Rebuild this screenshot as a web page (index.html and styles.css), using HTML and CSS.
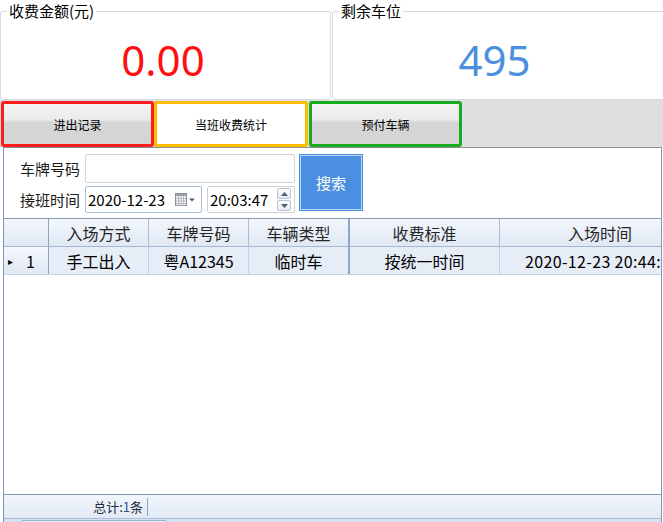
FILE: index.html
```html
<!DOCTYPE html>
<html lang="zh-CN">
<head>
<meta charset="utf-8">
<title>当班收费统计</title>
<link rel="stylesheet" href="styles.css">
</head>
<body>
<div class="page">
  <div class="top">
    <fieldset class="group group-left">
      <legend class="group-title">收费金额(元)</legend>
      <div class="value value-red">0.00</div>
    </fieldset>
    <fieldset class="group group-right">
      <legend class="group-title">剩余车位</legend>
      <div class="value value-blue">495</div>
    </fieldset>
  </div>

  <div class="tabs">
    <div class="tab tab-red">进出记录</div>
    <div class="tab tab-yellow tab-active">当班收费统计</div>
    <div class="tab tab-green">预付车辆</div>
  </div>

  <div class="panel">
    <div class="form">
      <div class="fields">
        <div class="frow frow-1">
          <label class="flabel">车牌号码</label>
          <div class="textbox"></div>
        </div>
        <div class="frow frow-2">
          <label class="flabel">接班时间</label>
          <div class="datebox">
            <span class="dtext">2020-12-23</span>
            <svg class="cal" width="20" height="14" viewBox="0 0 20 14">
              <rect x="0.5" y="0.5" width="11" height="12" fill="#f4f4f4" stroke="#8a8f98"/>
              <rect x="1" y="1" width="10" height="2" fill="#9aa0a8"/>
              <path d="M1 5.5h10M1 8h10M1 10.5h10M3.5 3v10M6 3v10M8.5 3v10" stroke="#b7bcc4" stroke-width="1"/>
              <path d="M14 5.5h6l-3 3z" fill="#4e5f7d"/>
            </svg>
          </div>
          <div class="timebox">
            <span class="dtext">20:03:47</span>
            <div class="spin">
              <div class="spin-btn"><svg width="7" height="4" viewBox="0 0 7 4"><path d="M0 4h7L3.5 0z" fill="#4e5f7d"/></svg></div>
              <div class="spin-btn"><svg width="7" height="4" viewBox="0 0 7 4"><path d="M0 0h7L3.5 4z" fill="#4e5f7d"/></svg></div>
            </div>
          </div>
        </div>
      </div>
      <div class="search">搜索</div>
    </div>

    <div class="grid">
      <div class="grow ghead">
        <div class="cell c-rh"></div>
        <div class="cell c1">入场方式</div>
        <div class="cell c2">车牌号码</div>
        <div class="cell c3">车辆类型</div>
        <div class="cell c4">收费标准</div>
        <div class="cell c5">入场时间</div>
      </div>
      <div class="grow gdata">
        <div class="cell c-rh rh-data"><span class="arrow">&#9656;</span><span class="rnum">1</span></div>
        <div class="cell c1">手工出入</div>
        <div class="cell c2">粤A12345</div>
        <div class="cell c3">临时车</div>
        <div class="cell c4">按统一时间</div>
        <div class="cell c5"><span class="clip">2020-12-23 20:44:</span></div>
      </div>
      <div class="gfill"></div>
      <div class="status">
        <div class="status-cell">总计:<span class="snum">1</span>条</div>
      </div>
      <div class="hscroll"><div class="thumb"></div></div>
    </div>
  </div>
</div>
</body>
</html>
```

FILE: styles.css
```css
* { box-sizing: border-box; }
html, body { margin: 0; padding: 0; background: #ffffff; }
body {
  font-family: "Noto Sans CJK SC", "Noto Sans", sans-serif;
  color: #000;
}
.page {
  width: 663px;
  height: 522px;
  overflow: hidden;
  display: flex;
  flex-direction: column;
}

/* top group boxes */
.top { display: flex; height: 100px; flex: none; }
.group {
  margin: 0;
  padding: 0;
  border: 1px solid #d3dae3;
  border-radius: 3px;
  min-width: 0;
  flex: none;
}
.group-left { width: 331px; }
.group-right { width: 334px; margin-left: 1px; }
.group-title {
  font-size: 15px;
  line-height: 22px;
  padding: 0 2px;
  margin-left: 6px;
  color: #000;
}
.value {
  height: 77px;
  display: flex;
  align-items: center;
  justify-content: center;
  font-family: "Noto Sans", sans-serif;
  font-size: 42px;
  line-height: 1;
  padding-bottom: 1px;
}
.value-red { color: #ff0f0f; padding-right: 5px; }
.value-blue { color: #4a8fe0; padding-right: 9px; }

/* tabs */
.tabs {
  flex: none;
  height: 47px;
  background: #dfdfdf;
  display: flex;
  align-items: flex-end;
  padding-left: 1px;
}
.tab {
  height: 46px;
  width: 153px;
  border: 3px solid;
  border-radius: 3px;
  display: flex;
  align-items: center;
  justify-content: center;
  font-size: 12px;
  background: linear-gradient(#f3f3f3 0, #ebebeb 40%, #d6d6d6 45%, #d4d4d4 100%);
}
.tab-red { border-color: #ff1c1c; }
.tab-yellow { border-color: #ffbb00; width: 154px; }
.tab-green { border-color: #19ab1e; margin-left: 1px; }
.tab-active { background: #ffffff; }

/* panel */
.panel {
  flex: 1;
  min-height: 0;
  margin-left: 3px;
  width: 659px;
  border-top: 1px solid #8e8e8e;
  border-left: 1px solid #7f9ab9;
  border-right: 1px solid #7f9ab9;
  display: flex;
  flex-direction: column;
}
.form {
  flex: none;
  display: flex;
  align-items: flex-start;
  padding: 6px 0 0 16px;
}
.fields { display: flex; flex-direction: column; }
.frow { display: flex; align-items: center; }
.frow-1 { height: 29px; }
.frow-2 { height: 27px; margin-top: 3px; }
.flabel {
  width: 65px;
  font-size: 15px;
  color: #1a1a1a;
}
.textbox {
  width: 210px;
  height: 29px;
  border: 1px solid #d4d4d4;
  border-radius: 2px;
  background: #fff;
}
.datebox, .timebox {
  height: 27px;
  display: flex;
  align-items: center;
  background: #fff;
}
.datebox {
  width: 117px;
  border: 1px solid #a9bfd9;
  border-radius: 2px;
  padding-left: 2px;
}
.timebox {
  width: 88px;
  margin-left: 5px;
  border: 1px solid #d0d0d0;
  border-radius: 2px;
  padding-left: 2px;
}
.dtext { font-size: 15px; color: #000; white-space: nowrap; }
.cal { margin-left: auto; margin-right: 6px; }
.spin {
  margin-left: auto;
  margin-right: 3px;
  display: flex;
  flex-direction: column;
  gap: 1px;
}
.spin-btn {
  width: 14px;
  height: 11px;
  border: 1px solid #b9c3d0;
  border-radius: 2px;
  background: linear-gradient(#ffffff, #e6eaf0);
  display: flex;
  align-items: center;
  justify-content: center;
}
.search {
  margin-left: 4px;
  width: 64px;
  height: 57px;
  background: #4a8fe0;
  border: 1px solid #4a8fe0;
  box-shadow: inset 0 0 0 1px #b9d4f4;
  color: #fff;
  font-size: 15px;
  display: flex;
  align-items: center;
  justify-content: center;
}

/* grid */
.grid {
  flex: 1;
  min-height: 0;
  margin-top: 5px;
  border-top: 1px solid #7f9ab9;
  display: flex;
  flex-direction: column;
}
.grow {
  flex: none;
  height: 28px;
  display: flex;
  overflow: hidden;
  font-size: 16px;
}
.ghead {
  background: linear-gradient(#f4f7fc, #dfe8f4);
  border-bottom: 1px solid #a5b8d1;
  color: #262626;
}
.gdata {
  background: #e6edf7;
  border-bottom: 1px solid #c3d2e6;
  color: #000;
}
.cell {
  flex: none;
  display: flex;
  align-items: center;
  justify-content: center;
  white-space: nowrap;
  overflow: hidden;
  border-right: 1px solid #a9bcd4;
}
.gdata .cell { border-right-color: #c3d3e8; }
.c-rh { width: 45px; border-right-color: #8ea5c4; }
.gdata .c-rh {
  background: linear-gradient(#f4f7fc, #dfe8f4);
  border-right-color: #8ea5c4;
  justify-content: flex-start;
}
.c1 { width: 100px; }
.c2 { width: 100px; }
.c3 { width: 101px; border-right: 2px solid #8ea5c4 !important; }
.c4 { width: 150px; }
.c5 { width: 200px; border-right: none; }
.gdata .c5 { justify-content: flex-start; padding-left: 25px; }
.clip { letter-spacing: 0.35px; }
.arrow { font-size: 10px; margin-left: 4px; width: 18px; }
.rnum { font-size: 16px; }
.gfill { flex: 1; background: #fff; }
.status {
  flex: none;
  height: 24px;
  border-top: 1px solid #7f9ab9;
  background: linear-gradient(#f2f6fc, #e1eaf6);
  display: flex;
  align-items: center;
}
.status-cell {
  width: 144px;
  height: 18px;
  line-height: 18px;
  text-align: right;
  padding-right: 4px;
  border-right: 1px solid #8ea5c4;
  font-size: 13px;
  color: #1e2b3d;
}
.snum { color: #2f4f8f; }
.hscroll {
  flex: none;
  height: 4px;
  background: #d5e1f1;
  border-top: 1px solid #a8bcd6;
  position: relative;
}
.thumb {
  position: absolute;
  left: 17px;
  top: 1px;
  width: 146px;
  height: 6px;
  border: 1px solid #9bb0cc;
  border-radius: 2px;
  background: #e6eef9;
}
```
